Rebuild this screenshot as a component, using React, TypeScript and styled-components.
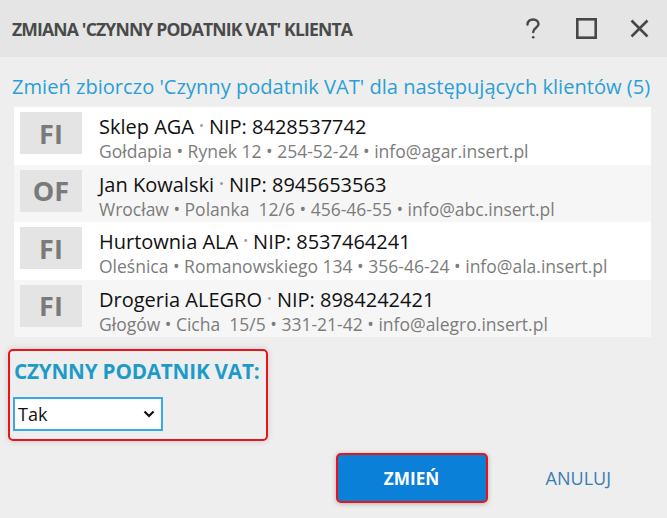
import styled, { createGlobalStyle } from "styled-components";

const GlobalStyle = createGlobalStyle`
  html, body {
    margin: 0;
    padding: 0;
    background: #eeeeee;
  }
  body {
    font-family: "Open Sans", "Noto Sans", sans-serif;
  }
`;

const Dialog = styled.div`
  width: 667px;
  height: 518px;
  display: flex;
  flex-direction: column;
  background: #eeeeee;
  overflow: hidden;
`;

const TitleBar = styled.div`
  height: 57px;
  display: flex;
  align-items: center;
  padding-left: 12px;
  padding-right: 14px;
  background: #e5e5e5;
`;

const Title = styled.h1`
  flex: 1;
  margin: 0;
  font-size: 17.6px;
  font-weight: 700;
  color: #4a4a4a;
  letter-spacing: -0.85px;
`;

const TitleButtons = styled.div`
  display: flex;
  align-items: center;
  gap: 25px;
`;

const IconButton = styled.button`
  width: 28px;
  height: 28px;
  padding: 0;
  border: none;
  background: none;
  display: flex;
  align-items: center;
  justify-content: center;
  color: #474747;
  cursor: pointer;
`;

const Content = styled.div`
  padding: 16px 16px 0 14px;
  display: flex;
  flex-direction: column;
`;

const Lead = styled.p`
  margin: 0 0 7px -2px;
  font-size: 20.1px;
  line-height: 27px;
  color: #2a9fd6;
  white-space: nowrap;
`;

const ClientList = styled.ul`
  list-style: none;
  margin: 0;
  padding: 0;
  background: #ffffff;
`;

const ClientRow = styled.li<{ $shaded: boolean }>`
  height: 57.5px;
  box-sizing: border-box;
  padding: 5px 6px;
  display: flex;
  align-items: flex-start;
  gap: 17px;
  background: ${(p) => (p.$shaded ? "#f6f6f6" : "#ffffff")};
`;

const Badge = styled.div`
  width: 62px;
  height: 42px;
  flex-shrink: 0;
  display: flex;
  align-items: center;
  justify-content: center;
  background: #e4e4e4;
  color: #7a7a7a;
  font-size: 27px;
  font-weight: 700;
`;

const ClientInfo = styled.div`
  display: flex;
  flex-direction: column;
`;

const ClientName = styled.div`
  font-size: 20px;
  line-height: 26px;
  color: #111111;
  white-space: nowrap;
`;

const Dot = styled.span`
  font-size: 13px;
  color: #9a9a9a;
  margin: 0 5px;
  vertical-align: 4px;
`;

const ClientDetails = styled.div`
  font-size: 17.5px;
  line-height: 22px;
  color: #7c7c7c;
  white-space: pre;
`;

const FieldGroup = styled.div`
  margin: 12px 0 0 -6px;
  width: 260px;
  height: 92px;
  box-sizing: border-box;
  border: 2px solid #e8141c;
  border-radius: 5px;
  padding: 6px 0 0 3px;
  box-shadow: 0 0 6px rgba(0, 0, 0, 0.15);
`;

const FieldLabel = styled.label`
  display: block;
  font-size: 20.7px;
  line-height: 28px;
  font-weight: 700;
  color: #1d9bc8;
  letter-spacing: -0.2px;
  padding-left: 1px;
`;

const SelectBox = styled.div`
  margin-top: 12px;
  width: 150px;
  height: 34px;
  box-sizing: border-box;
  border: 2px solid #3aa8e3;
  background: #ffffff;
  display: flex;
  align-items: center;
  justify-content: space-between;
  padding: 0 6px 0 3px;
  font-size: 18px;
  color: #111;
`;

const Actions = styled.div`
  display: flex;
  justify-content: flex-end;
  align-items: center;
  gap: 58px;
  padding: 12px 56px 0 0;
`;

const PrimaryButton = styled.button`
  width: 152px;
  height: 50px;
  box-sizing: border-box;
  border: 2px solid #e8141c;
  border-radius: 5px;
  background: #0a80d9;
  color: #ffffff;
  font-family: inherit;
  font-size: 17.2px;
  font-weight: 700;
  box-shadow: 0 1px 5px rgba(0, 0, 0, 0.25);
`;

const LinkButton = styled.button`
  border: none;
  background: none;
  padding: 0;
  font-family: inherit;
  font-size: 18px;
  color: #3a7db3;
`;

const clients = [
  { kind: "FI", name: "Sklep AGA", nip: "8428537742", details: "Gołdapia • Rynek 12 • 254-52-24 • info@agar.insert.pl" },
  { kind: "OF", name: "Jan Kowalski", nip: "8945653563", details: "Wrocław • Polanka  12/6 • 456-46-55 • info@abc.insert.pl" },
  { kind: "FI", name: "Hurtownia ALA", nip: "8537464241", details: "Oleśnica • Romanowskiego 134 • 356-46-24 • info@ala.insert.pl" },
  { kind: "FI", name: "Drogeria ALEGRO", nip: "8984242421", details: "Głogów • Cicha  15/5 • 331-21-42 • info@alegro.insert.pl" },
];

function App() {
  return (
    <Dialog>
      <GlobalStyle />
      <TitleBar>
        <Title>ZMIANA 'CZYNNY PODATNIK VAT' KLIENTA</Title>
        <TitleButtons>
          <IconButton aria-label="Pomoc">
            <svg width="16" height="22" viewBox="0 0 16 22" fill="none" stroke="currentColor" strokeWidth="2.4" strokeLinecap="round">
              <path d="M2.5 6.5 C2.5 3.2 5 1.5 8 1.5 C11 1.5 13.5 3.3 13.5 6.3 C13.5 9.5 8.2 10.2 8.2 14" />
              <circle cx="8.2" cy="19.3" r="1.3" fill="currentColor" stroke="none" />
            </svg>
          </IconButton>
          <IconButton aria-label="Maksymalizuj">
            <svg width="21" height="21" viewBox="0 0 21 21" fill="none" stroke="currentColor" strokeWidth="2.6">
              <rect x="1.3" y="1.3" width="18.4" height="18.4" />
            </svg>
          </IconButton>
          <IconButton aria-label="Zamknij">
            <svg width="19" height="19" viewBox="0 0 19 19" fill="none" stroke="currentColor" strokeWidth="2.6">
              <path d="M1.5 1.5 L17.5 17.5 M17.5 1.5 L1.5 17.5" />
            </svg>
          </IconButton>
        </TitleButtons>
      </TitleBar>
      <Content>
        <Lead>Zmień zbiorczo 'Czynny podatnik VAT' dla następujących klientów (5)</Lead>
        <ClientList>
          {clients.map((c, i) => (
            <ClientRow key={c.nip} $shaded={i % 2 === 1}>
              <Badge>{c.kind}</Badge>
              <ClientInfo>
                <ClientName>
                  {c.name}
                  <Dot>•</Dot>
                  NIP: {c.nip}
                </ClientName>
                <ClientDetails>{c.details}</ClientDetails>
              </ClientInfo>
            </ClientRow>
          ))}
        </ClientList>
        <FieldGroup>
          <FieldLabel>CZYNNY PODATNIK VAT:</FieldLabel>
          <SelectBox>
            <span>Tak</span>
            <svg width="12" height="8" viewBox="0 0 12 8" fill="none" stroke="#111" strokeWidth="2.2">
              <path d="M1.5 1.5 L6 6 L10.5 1.5" />
            </svg>
          </SelectBox>
        </FieldGroup>
      </Content>
      <Actions>
        <PrimaryButton>ZMIEŃ</PrimaryButton>
        <LinkButton>ANULUJ</LinkButton>
      </Actions>
    </Dialog>
  );
}

export default App;
